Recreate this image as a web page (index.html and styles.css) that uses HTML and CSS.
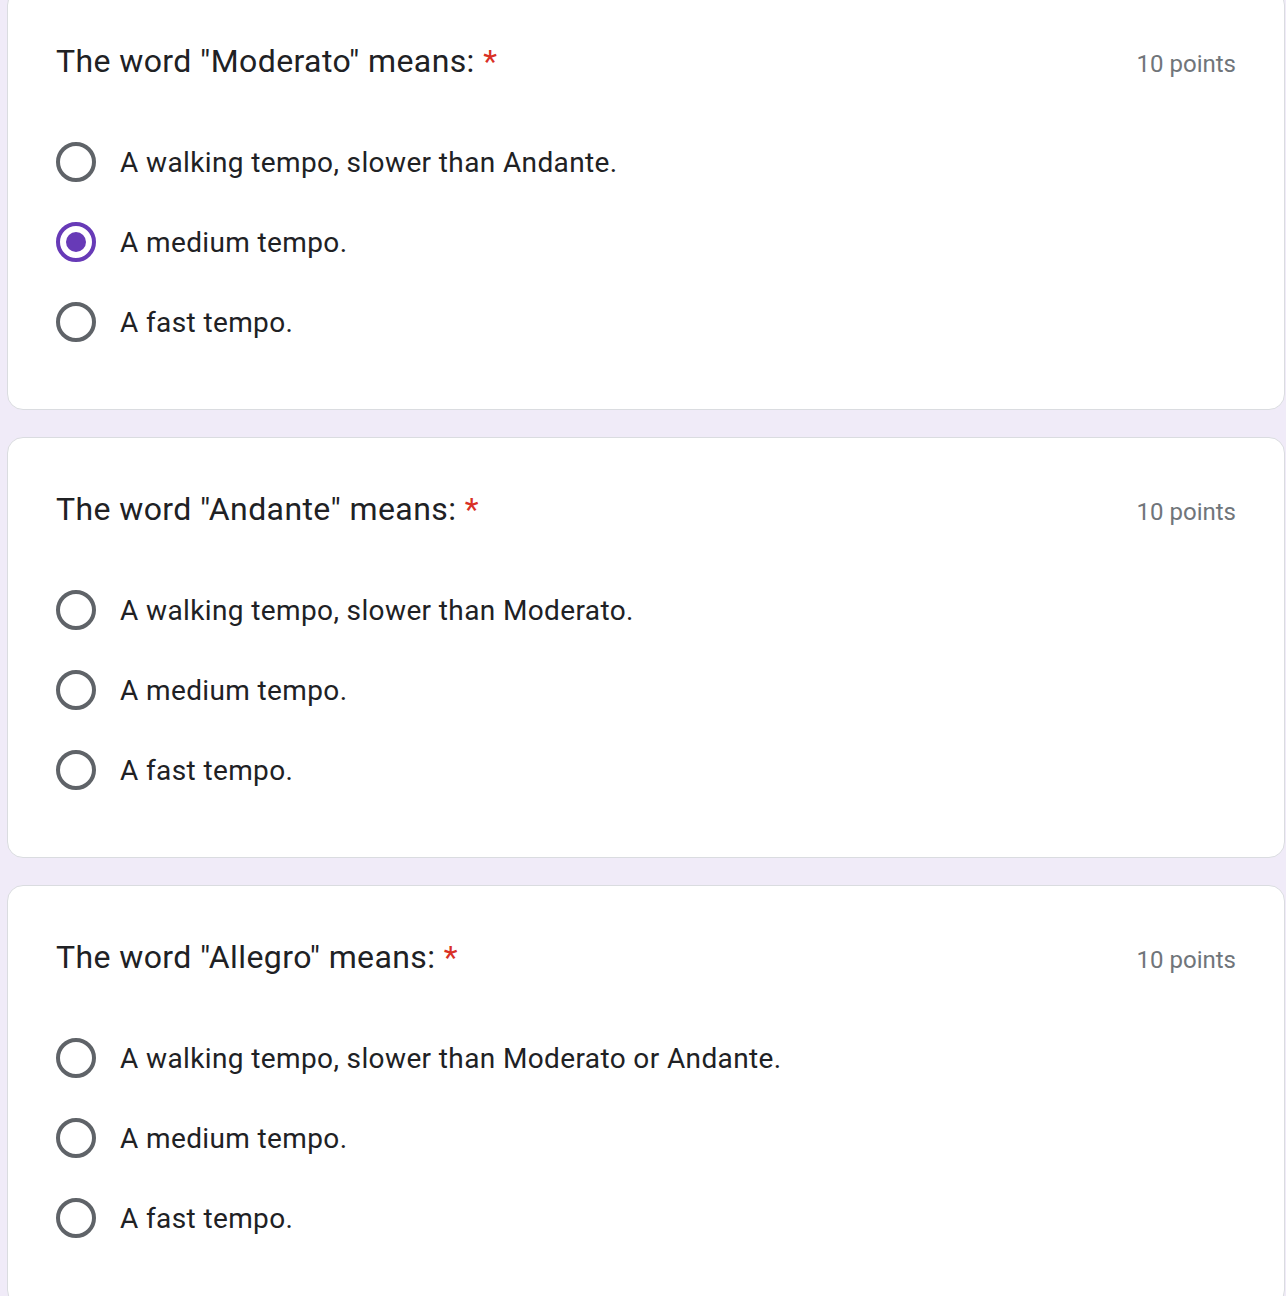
FILE: index.html
```html
<!DOCTYPE html>
<html>
<head>
<meta charset="utf-8">
<link rel="stylesheet" href="styles.css">
</head>
<body>
<div class="page">
  <div class="card">
    <div class="head">
      <div class="title">The word "Moderato" means: <span class="req">*</span></div>
      <div class="points">10 points</div>
    </div>
    <div class="options">
      <div class="opt"><span class="radio"></span><span class="label">A walking tempo, slower than Andante.</span></div>
      <div class="opt"><span class="radio checked"></span><span class="label">A medium tempo.</span></div>
      <div class="opt"><span class="radio"></span><span class="label">A fast tempo.</span></div>
    </div>
  </div>
  <div class="card">
    <div class="head">
      <div class="title">The word "Andante" means: <span class="req">*</span></div>
      <div class="points">10 points</div>
    </div>
    <div class="options">
      <div class="opt"><span class="radio"></span><span class="label">A walking tempo, slower than Moderato.</span></div>
      <div class="opt"><span class="radio"></span><span class="label">A medium tempo.</span></div>
      <div class="opt"><span class="radio"></span><span class="label">A fast tempo.</span></div>
    </div>
  </div>
  <div class="card">
    <div class="head">
      <div class="title">The word "Allegro" means: <span class="req">*</span></div>
      <div class="points">10 points</div>
    </div>
    <div class="options">
      <div class="opt"><span class="radio"></span><span class="label">A walking tempo, slower than Moderato or Andante.</span></div>
      <div class="opt"><span class="radio"></span><span class="label">A medium tempo.</span></div>
      <div class="opt"><span class="radio"></span><span class="label">A fast tempo.</span></div>
    </div>
  </div>
</div>
</body>
</html>
```
FILE: styles.css
```css
html, body {
  margin: 0;
  padding: 0;
  background: #f0ebf8;
  overflow: hidden;
}
body {
  font-family: Roboto, "Liberation Sans", sans-serif;
  color: #202124;
}
.page {
  margin-top: -11px;
  padding: 0 1px 0 7px;
  display: flex;
  flex-direction: column;
  gap: 27px;
}
.card {
  background: #fff;
  border: 1px solid #dadce0;
  border-radius: 16px;
  padding: 47px 48px 47px 48px;
}
.head {
  display: flex;
  justify-content: space-between;
  align-items: center;
  height: 48px;
}
.title {
  font-size: 32px;
  line-height: 48px;
  letter-spacing: 0.4px;
}
.req {
  color: #d93025;
}
.points {
  font-size: 24px;
  color: #70757a;
  letter-spacing: 0;
  padding-top: 6px;
}
.options {
  margin-top: 37px;
  display: flex;
  flex-direction: column;
}
.opt {
  height: 80px;
  display: flex;
  align-items: center;
  gap: 24px;
}
.radio {
  width: 40px;
  height: 40px;
  box-sizing: border-box;
  border: 4px solid #5f6368;
  border-radius: 50%;
  display: flex;
  align-items: center;
  justify-content: center;
  flex: none;
}
.radio.checked {
  border-color: #673ab7;
}
.radio.checked::after {
  content: "";
  width: 20px;
  height: 20px;
  border-radius: 50%;
  background: #673ab7;
}
.label {
  font-size: 28px;
  letter-spacing: 0.38px;
}
```
